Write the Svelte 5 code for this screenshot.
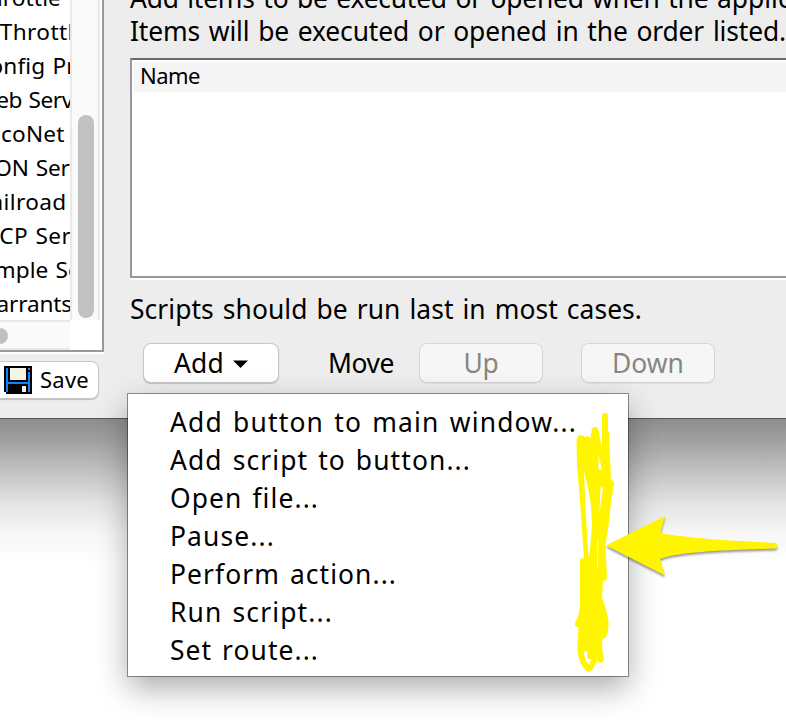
<script>
  const prefs = [
    ['Throttle', -24, 85], ['WiThrottle', -28, 115], ['Config Profiles', -25, 158],
    ['Web Server', -24, 118], ['LocoNet Server', -25, 166], ['JSON Server', -24, 127],
    ['Railroad Name', -24, 163], ['SRCP Server', -28, 134], ['Simple Server', -24, 148],
    ['Warrants', -24, 96]
  ];
  const items = [
    ['Add button to main window...', 407], ['Add script to button...', 301],
    ['Open file...', 149], ['Pause...', 105], ['Perform action...', 227],
    ['Run script...', 163], ['Set route...', 149]
  ];
  // Spreads the letters of a label over a set width.
  function fit(node, width) {
    const natural = node.getBoundingClientRect().width;
    node.style.letterSpacing = `${(width - natural) / node.textContent.length}px`;
  }
</script>

<div class="screen">
  <div class="window">
    <aside>
      <div class="list">
        <div class="rows">
          {#each prefs as [name, left, width]}
            <div class="row" style:margin-left="{left}px"><span use:fit={width}>{name}</span></div>
          {/each}
        </div>
        <div class="vbar"><div class="vthumb"></div></div>
        <div class="hbar"><div class="hthumb"></div></div>
      </div>
      <button class="save">
        <svg width="28" height="28" viewBox="0 0 14 14" shape-rendering="crispEdges">
          <path fill="#000" d="M0 0h14v14H1v-1H0z" />
          <path fill="#0a84ff" d="M1 1h1v7h10V3h1v10h-1V9H2v4H1z" />
          <path fill="#f4f4e6" d="M3 1h8v6H3zM9 10h2v3H9z" />
          <path fill="#77776a" d="M12 1h1v1h-1z" />
        </svg>
        <span use:fit={49}>Save</span>
      </button>
    </aside>
    <main>
      <p class="first"><span use:fit={587}>Add items to be executed or opened when the&nbsp;</span><span>application starts.</span></p>
      <p><span use:fit={656}>Items will be executed or opened in the order listed.</span></p>
      <div class="table"><div class="head"><span use:fit={60}>Name</span></div></div>
      <p class="note"><span use:fit={512}>Scripts should be run last in most cases.</span></p>
      <div class="actions">
        <button class="add"><span use:fit={50}>Add</span><svg width="15" height="8" viewBox="0 0 15 8"><path d="M0 .4h15L7.500 8z" /></svg></button>
        <span class="move"><span use:fit={66}>Move</span></span>
        <button class="up" disabled><span use:fit={35}>Up</span></button>
        <button class="down" disabled><span use:fit={72}>Down</span></button>
      </div>
    </main>
  </div>
  <div class="menu">
    {#each items as [label, width]}
      <div class="item"><span use:fit={width}>{label}</span></div>
    {/each}
  </div>
  <svg class="marks" width="786" height="726" viewBox="0 0 786 726">
    <path fill="#fff500" fill-rule="evenodd" d="M576.500 441Q577 435 581 435Q583.500 435 584.500 437.500Q587.500 435 590.500 438L591.500 431Q592 427 595 427Q598 427 598.500 430L602 450V416Q602 413 605 413Q608 413 608 416V431L609 433L611 480Q614 480 614 484L611 502L609 522L605.500 545L607 578Q606.500 581 603 581L602 598Q606.500 608 608.500 622Q609 638 602.500 639L602 647L604 660Q603 663 601 663Q598.500 663 597.500 660Q593 671 589 672Q585 671 581 664Q577 656 577.500 644L578.500 627Q574 627 575.500 622Q579 616 580 605V560Q580 558 584 558L580.300 505L577 465Z
      M584 471L585.500 510L588.500 558L590 550L592 525L591 505L588 488Z
      M598.500 455L602 469.500L598.500 469Z
      M600.500 487L603 488L600.500 505L599.500 515Z
      M597.500 540L598.200 540L598 567L597.200 567Z
      M584 652L587 651L587.500 658Q589 660 592 659L589 664.500Q584 660 584 652Z" />
    <path class="arrow" d="M606 545.500L665 516L660.500 533C690 539 740 541 776 543Q778.500 545.500 776 548.500C735 550 680 551 660 559L665 575.500z" />
  </svg>
</div>

<style>
  :global(body) { background: #fff; }
  .screen { position: relative; width: 786px; height: 726px; overflow: hidden; background: #fff; font: 26.4px/38px "Noto Sans", "Open Sans", sans-serif; word-spacing: 2px; color: #000; white-space: nowrap; }
  .window { display: flex; height: 418px; background: #ededed; border-bottom: 1px solid #555; }
  .screen::before { content: ""; position: absolute; left: 0; right: 0; top: 419px; height: 145px; background: linear-gradient(#8d8d8d, #a4a4a4 17%, #c3c3c3 37%, #e3e3e3 58%, #f6f6f6 78%, #fff); }
  aside { width: 104px; flex: none; }
  .list { box-sizing: border-box; width: 104px; height: 352px; border: solid #999; border-width: 0 2px 2px 0; background: #fff; display: grid; grid-template: 320px 30px / 70px 32px; box-shadow: 0 2px #fff; }
  .rows { overflow: hidden; font-size: 22.6px; word-spacing: 1px; display: flex; flex-direction: column; justify-content: flex-end; }
  .row { height: 34px; line-height: 35px; flex: none; }
  .vbar { box-sizing: border-box; width: 30px; border: solid #e8e8e8; border-width: 0 2px; background: #fafafa; padding: 115px 0 0 6px; }
  .vthumb { width: 16px; height: 203px; border-radius: 8px; background: #c1c1c1; }
  .hbar { box-sizing: border-box; height: 30px; background: #fafafa; border: solid #e8e8e8; border-width: 2px 0; padding-top: 6px; }
  .hthumb { width: 8px; height: 16px; background: #c1c1c1; border-radius: 0 8px 8px 0; }
  button { box-sizing: border-box; font: inherit; word-spacing: inherit; color: #000; padding: 0; border: 1px solid #c6c6c6; border-radius: 8px; background: #fff; height: 40px; display: flex; align-items: center; box-shadow: 0 1px 1px #0003; }
  .save { width: 111px; height: 38px; margin: 9px 0 0 -12px; padding-left: 15px; gap: 8px; font-size: 22px; line-height: 34px; }
  .save span { padding-bottom: 2px; }
  main { flex: 1; min-width: 0; padding-left: 26px; }
  p { margin: 0; height: 33px; line-height: 33px; }
  .first { margin-top: -18px; }
  .table { box-sizing: border-box; height: 220px; margin-top: 10px; border: solid #999; border-width: 2px 0 2px 2px; border-top-color: #6b6b6b; background: #fff; padding: 2px 0 0 2px; box-shadow: 0 2px #fff; }
  .head { height: 30px; line-height: 27px; background: #f5f5f5; padding-left: 6px; font-size: 22px; }
  .note { margin-top: 15px; }
  .actions { display: flex; align-items: center; margin: 17px 0 0 13px; height: 40px; }
  .add { width: 136px; padding-left: 30px; gap: 9px; }
  .add svg { margin-top: 2px; }
  .move { width: 91px; margin-left: 49px; }
  .up { width: 124px; justify-content: center; }
  .down { width: 134px; justify-content: center; margin-left: 38px; }
  button:disabled { color: #858585; background: #f6f6f6; border-color: #d6d6d6; box-shadow: 0 1px #0000000d; }
  .menu { position: absolute; left: 128px; top: 394px; width: 500px; height: 282px; box-sizing: border-box; padding: 9px 0 0 42px; background: #fff; box-shadow: 0 0 0 1px #0006, 0 12px 30px #0005; }
  .item { height: 38px; }
  .marks { position: absolute; inset: 0; }
  .arrow { fill: #fff500; filter: drop-shadow(0 2px 1px #0006); }
</style>
